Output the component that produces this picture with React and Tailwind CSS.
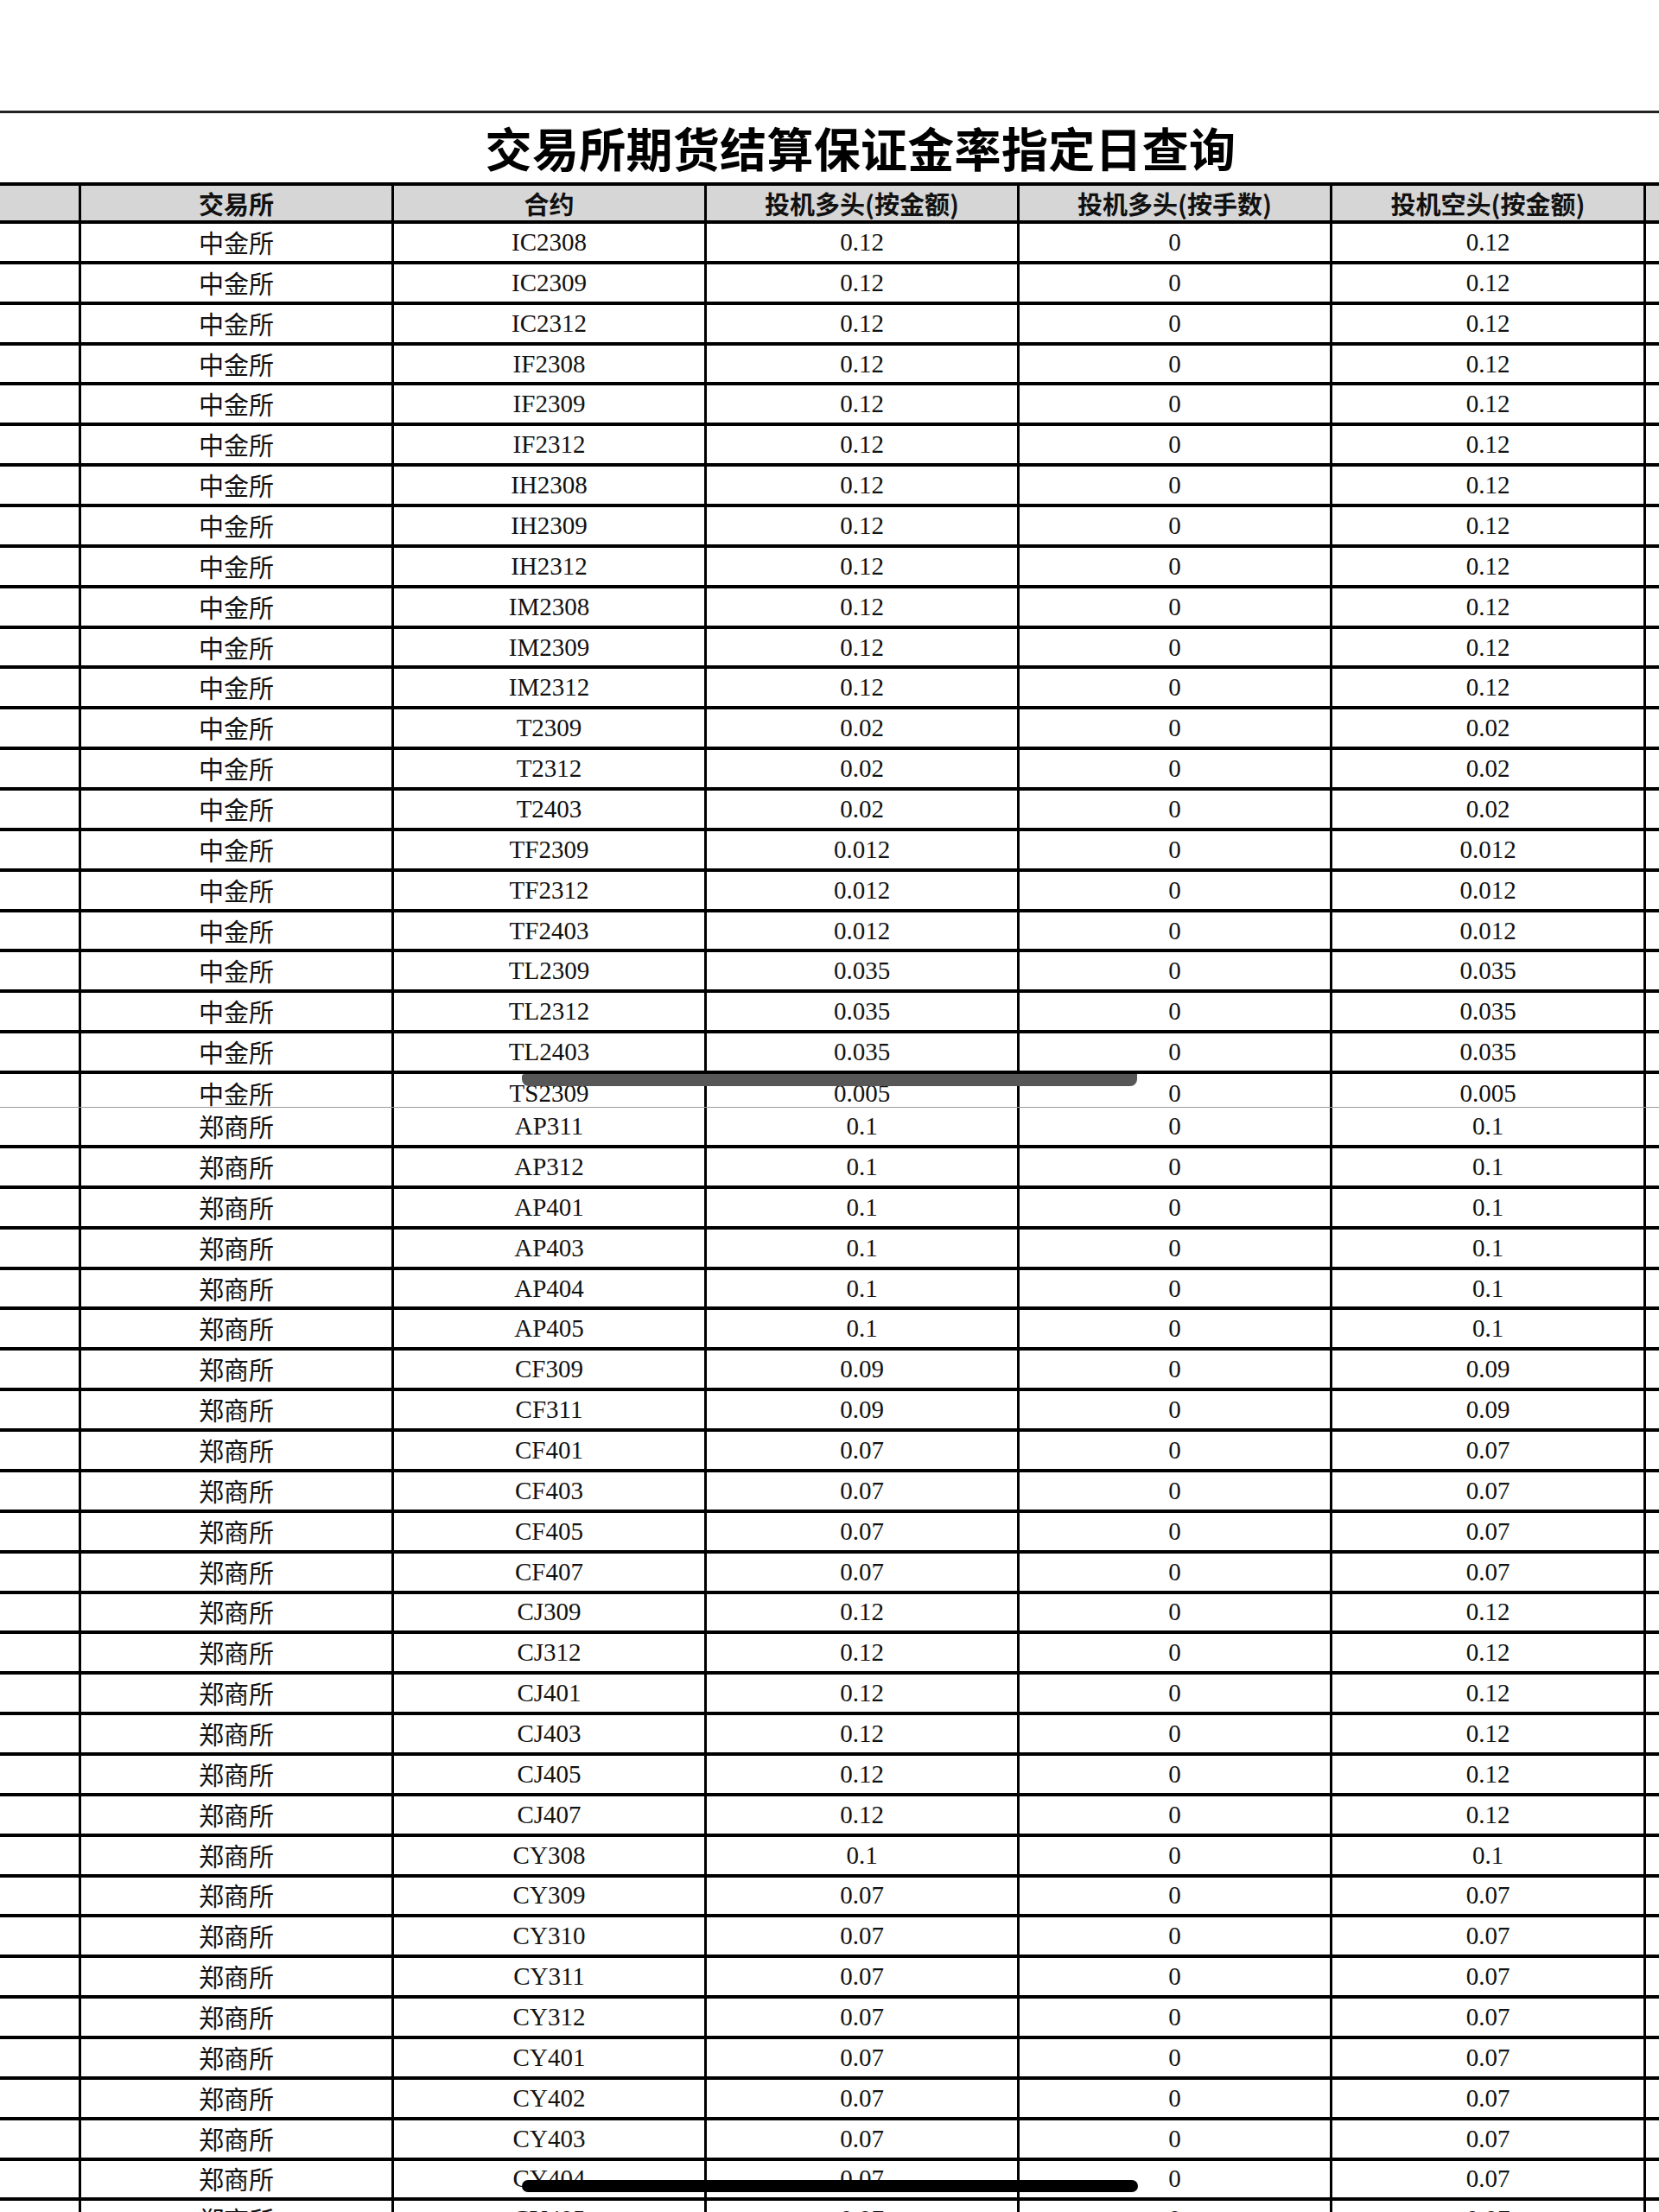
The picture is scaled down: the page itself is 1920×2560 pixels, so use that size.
const upper = [
  ["IC2308", "0.12"], ["IC2309", "0.12"], ["IC2312", "0.12"],
  ["IF2308", "0.12"], ["IF2309", "0.12"], ["IF2312", "0.12"],
  ["IH2308", "0.12"], ["IH2309", "0.12"], ["IH2312", "0.12"],
  ["IM2308", "0.12"], ["IM2309", "0.12"], ["IM2312", "0.12"],
  ["T2309", "0.02"], ["T2312", "0.02"], ["T2403", "0.02"],
  ["TF2309", "0.012"], ["TF2312", "0.012"], ["TF2403", "0.012"],
  ["TL2309", "0.035"], ["TL2312", "0.035"], ["TL2403", "0.035"],
];

const lower = [
  ["AP311", "0.1"], ["AP312", "0.1"], ["AP401", "0.1"], ["AP403", "0.1"],
  ["AP404", "0.1"], ["AP405", "0.1"],
  ["CF309", "0.09"], ["CF311", "0.09"], ["CF401", "0.07"], ["CF403", "0.07"],
  ["CF405", "0.07"], ["CF407", "0.07"],
  ["CJ309", "0.12"], ["CJ312", "0.12"], ["CJ401", "0.12"], ["CJ403", "0.12"],
  ["CJ405", "0.12"], ["CJ407", "0.12"],
  ["CY308", "0.1"], ["CY309", "0.07"], ["CY310", "0.07"], ["CY311", "0.07"],
  ["CY312", "0.07"], ["CY401", "0.07"], ["CY402", "0.07"], ["CY403", "0.07"],
  ["CY404", "0.07"], ["CY405", "0.07"],
];

const cols = "grid grid-cols-[94px_362px_362px_362px_362px_363px_1fr]";
const cell = "flex items-center justify-center border-r-[3px] border-black";
const cjk = "font-['Noto_Sans_CJK_SC',sans-serif]";
const serif = "font-['Liberation_Serif','Times_New_Roman',serif] text-[29px]";

function Cells({ ex, code, val }) {
  return (
    <>
      <div className={cell} />
      <div className={`${cell} ${cjk} text-[29px]`}>{ex}</div>
      <div className={`${cell} ${serif}`}>{code}</div>
      <div className={`${cell} ${serif}`}>{val}</div>
      <div className={`${cell} ${serif}`}>0</div>
      <div className={`${cell} ${serif}`}>{val}</div>
      <div />
    </>
  );
}

function Row({ ex, code, val, h = "h-[46.86px]" }) {
  return (
    <div className={`${cols} ${h} border-b-4 border-black leading-none text-[#111]`}>
      <Cells ex={ex} code={code} val={val} />
    </div>
  );
}

export default function App() {
  const heads = ["交易所", "合约", "投机多头(按金额)", "投机多头(按手数)", "投机空头(按金额)"];
  return (
    <div className="relative h-[2560px] w-[1920px] overflow-hidden bg-white">
      <div className="h-[128px]" />
      <div className="flex h-[83px] items-center justify-center border-t-[3px] border-[#222] pl-[72px]">
        <h1 className={`${cjk} text-[54px] font-bold leading-none tracking-[0.3px] text-black`}>
          交易所期货结算保证金率指定日查询
        </h1>
      </div>

      <div className={`${cols} h-[48px] border-y-4 border-black bg-[#d6d6d6] leading-none`}>
        <div className={cell} />
        {heads.map((t) => (
          <div key={t} className={`${cell} ${cjk} text-[29px] font-bold text-[#111]`}>
            {t}
          </div>
        ))}
        <div />
      </div>

      {upper.map(([code, val]) => (
        <Row key={code} ex="中金所" code={code} val={val} />
      ))}

      {/* 第一张截图在这里被截断 */}
      <div className="h-[38px] overflow-hidden">
        <div className={`${cols} h-[44px] leading-none text-[#111]`}>
          <Cells ex="中金所" code="TS2309" val="0.005" />
        </div>
      </div>
      <div className="h-[1px] bg-[#9c9c9c]" />

      {lower.map(([code, val], i) => (
        <Row key={code} ex="郑商所" code={code} val={val} h={i === 0 ? "h-[47px]" : "h-[46.86px]"} />
      ))}

      {/* home indicators */}
      <div className="absolute left-[604px] top-[1243px] h-[14px] w-[712px] rounded-b-[8px] rounded-tl-[3px] bg-[#575757]" />
      <div className="absolute left-[604px] top-[2523px] h-[14px] w-[713px] rounded-full bg-black" />
    </div>
  );
}
